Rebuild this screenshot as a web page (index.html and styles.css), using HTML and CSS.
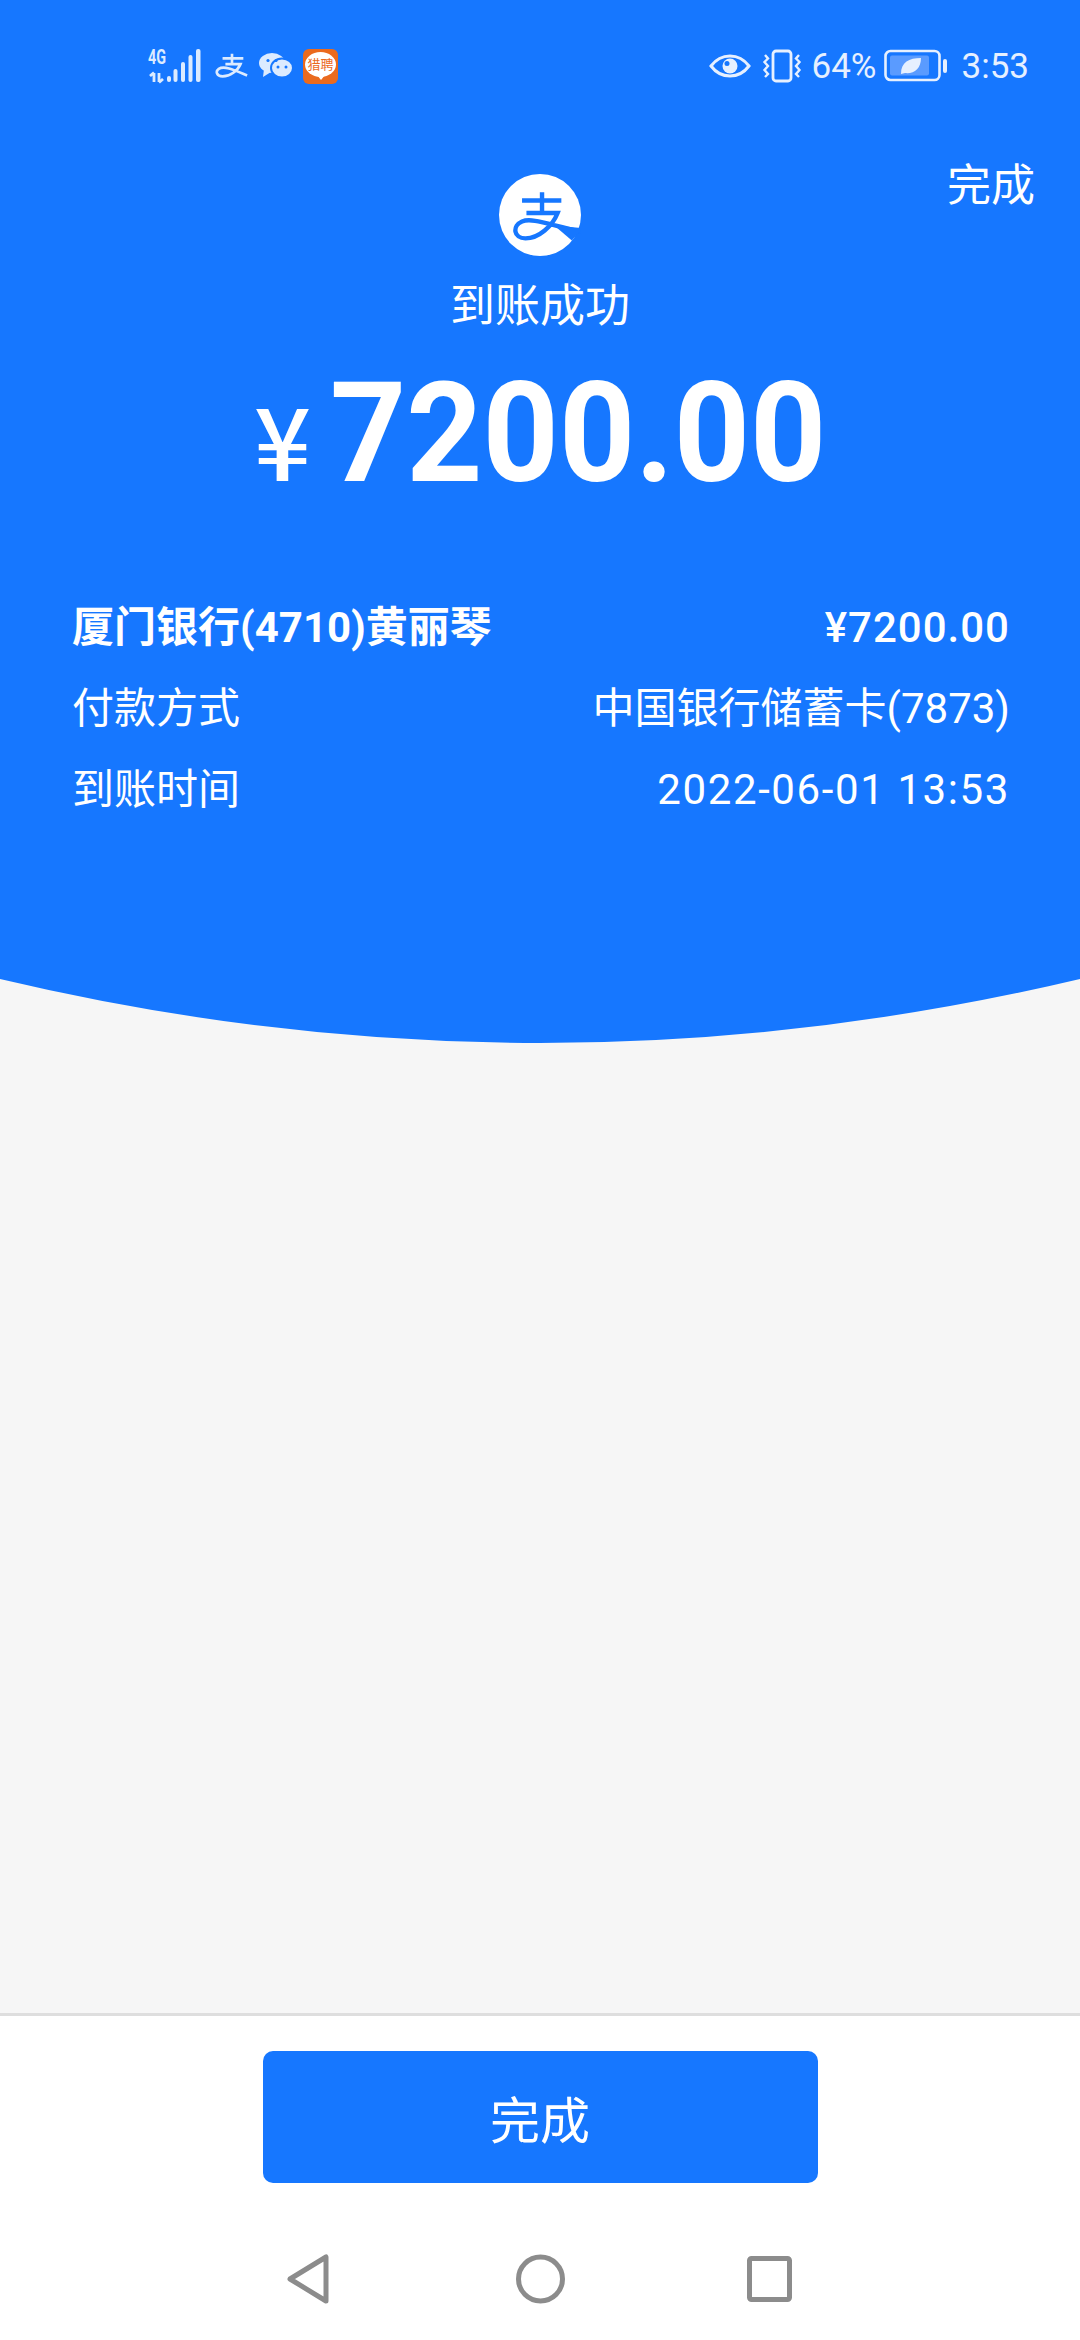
FILE: index.html
```html
<!DOCTYPE html>
<html>
<head>
    <title>到账成功</title>
    <meta charset="UTF-8">
    <meta name="viewport" content="width=device-width, initial-scale=1">
    <link rel="stylesheet" href="styles.css">
</head>
<body>
    <div class="page">
        <div class="hero">
            <div class="status-bar">
                <div class="status-left">
                    <div class="net">
                        <svg width="54" height="39" viewBox="0 -4 54 39">
                            <g fill="#dcebff">
                                <rect x="19" y="27" width="4" height="6" rx="2"/>
                                <rect x="25.500" y="20" width="4" height="13" rx="2"/>
                                <rect x="33" y="13" width="4" height="20" rx="2"/>
                                <rect x="40.500" y="6" width="4" height="27" rx="2"/>
                                <rect x="48" y="0" width="4.500" height="33" rx="2"/>
                            </g>
                            <g fill="none" stroke="#dcebff" stroke-width="2.800">
                                <path d="M6 24V33M2 27L6 23.500M11 24V33M15 30L11 33.500"/>
                            </g>
                            <text x="0" y="15" class="net-label" textLength="18" lengthAdjust="spacingAndGlyphs">4G</text>
                        </svg>
                    </div>
                    <svg class="ico-alipay" width="34" height="26" viewBox="0 0 36 26">
                        <path d="M8 5H30M18 0V10M11 11H27C24 18 16 24 8 24C2 24 0 19 4 16C10 12 22 18 34 23" fill="none" stroke="#dcebff" stroke-width="2.800"/>
                    </svg>
                    <svg class="ico-wechat" width="34" height="26" viewBox="0 0 34 26">
                        <ellipse cx="13" cy="10" rx="13" ry="10" fill="#dcebff"/>
                        <path d="M5 16L4 24L12 19Z" fill="#dcebff"/>
                        <ellipse cx="23" cy="15" rx="11" ry="9.500" fill="#dcebff" stroke="#1677ff" stroke-width="2"/>
                        <circle cx="9" cy="7.500" r="1.600" fill="#1677ff"/>
                        <circle cx="17" cy="7.500" r="1.600" fill="#1677ff"/>
                        <circle cx="19" cy="14" r="1.500" fill="#1677ff"/>
                        <circle cx="27" cy="14" r="1.500" fill="#1677ff"/>
                    </svg>
                    <div class="liepin"><span class="liepin-text">猎聘</span></div>
                </div>
                <div class="status-right">
                    <svg width="42" height="24" viewBox="0 0 42 24">
                        <path d="M2 12C8 4 14 2 21 2C28 2 34 4 40 12C34 20 28 22 21 22C14 22 8 20 2 12Z" fill="none" stroke="#e6f0ff" stroke-width="3"/>
                        <circle cx="21" cy="12" r="7.500" fill="#e6f0ff"/>
                        <circle cx="18" cy="9.500" r="2.500" fill="#1677ff"/>
                    </svg>
                    <svg class="ico-vibrate" width="40" height="34" viewBox="0 0 40 34">
                        <rect x="11" y="2" width="18" height="30" rx="3" fill="none" stroke="#e6f0ff" stroke-width="2.800"/>
                        <path d="M3 6L6 9.500L2.500 13L6 17L2.500 21L6 25L3 28M37 6L34 9.500L37.500 13L34 17L37.500 21L34 25L37 28" fill="none" stroke="#e6f0ff" stroke-width="2.400"/>
                    </svg>
                    <span class="status-text pct">64%</span>
                    <svg class="ico-battery" width="64" height="34" viewBox="0 0 64 34">
                        <rect x="1.500" y="2" width="54" height="29" rx="5" fill="none" stroke="#e6f0ff" stroke-width="2.600"/>
                        <rect x="6" y="6.500" width="39" height="20" rx="2" fill="#5a9bff"/>
                        <path d="M17 25C17 13 25 9 37 9C37 20 30 25 21 24L17 25Z" fill="#e6f0ff"/>
                        <rect x="59" y="10" width="4" height="14" rx="2" fill="#e6f0ff"/>
                    </svg>
                    <span class="status-text time">3:53</span>
                </div>
            </div>

            <div class="top-row">
                <div class="top-spacer"></div>
                <svg class="logo" width="82" height="82" viewBox="237 72 242 242">
                    <circle cx="358" cy="193" r="121" fill="#ffffff"/>
                    <path d="M305 150H421M364 126V186M318 187H410C395 225 355 262 315 262C280 262 275 225 305 212C335 200 385 222 480 242" fill="none" stroke="#1677ff" stroke-width="13"/>
                    <path d="M400 224L484 232L452 268Z" fill="#1677ff"/>
                </svg>
                <a class="done-link">完成</a>
            </div>

            <div class="title">到账成功</div>

            <div class="amount">
                <span class="amount-sign">¥</span>
                <span class="amount-num">7200.00</span>
            </div>

            <div class="details">
                <div class="row row-main">
                    <span>厦门银行(4710)黄丽琴</span>
                    <span class="row-money">¥7200.00</span>
                </div>
                <div class="row">
                    <span>付款方式</span>
                    <span>中国银行储蓄卡(7873)</span>
                </div>
                <div class="row">
                    <span>到账时间</span>
                    <span class="row-time">2022-06-01 13:53</span>
                </div>
            </div>
        </div>

        <svg class="curve" width="1080" height="64" viewBox="0 0 1080 64">
            <path d="M0 0H1080Q540 128 0 0Z" fill="#1677ff"/>
        </svg>

        <div class="content"></div>

        <div class="footer">
            <button type="button" class="btn-done">完成</button>
        </div>

        <div class="nav-bar">
            <svg class="nav-back" width="44" height="50" viewBox="0 0 44 50">
                <path d="M4 25L40 3V47Z" fill="none" stroke="#8c8c8c" stroke-width="5" stroke-linejoin="round"/>
            </svg>
            <svg width="49" height="50" viewBox="0 0 49 50">
                <circle cx="24.500" cy="25" r="22" fill="none" stroke="#8c8c8c" stroke-width="5"/>
            </svg>
            <svg class="nav-square" width="45" height="46" viewBox="0 0 45 46">
                <rect x="2.500" y="2.500" width="40" height="41" rx="2" fill="none" stroke="#8c8c8c" stroke-width="5"/>
            </svg>
        </div>
    </div>
</body>
</html>
```

FILE: styles.css
```css
html, body {
    margin: 0;
    padding: 0;
}

body {
    font-family: Roboto, "Noto Sans CJK SC", sans-serif;
    background-color: #f6f6f6;
}

.page {
    width: 1080px;
    height: 2340px;
    display: flex;
    flex-direction: column;
    overflow: hidden;
}

.hero {
    height: 979px;
    background-color: #1677ff;
    color: #ffffff;
    box-sizing: border-box;
    padding-top: 46px;
}

/* Status bar */
.status-bar {
    height: 40px;
    display: flex;
    justify-content: space-between;
    align-items: center;
    padding: 0 51px 0 148px;
}

.status-left, .status-right {
    display: flex;
    align-items: center;
}

.net {
    display: flex;
    margin-right: 13px;
    margin-bottom: 3px;
}

.net-label {
    font-family: Roboto, sans-serif;
    font-size: 20px;
    font-weight: 700;
    fill: #dcebff;
}

.ico-alipay {
    margin-right: 10px;
}

.ico-wechat {
    margin-right: 10px;
}

.liepin {
    width: 35px;
    height: 35px;
    border-radius: 6px;
    background-color: #ea6a1e;
    display: flex;
    align-items: center;
    justify-content: center;
}

.liepin-text {
    position: relative;
    width: 31px;
    height: 25px;
    line-height: 25px;
    margin-bottom: 3px;
    border-radius: 50%;
    background-color: #ffffff;
    color: #ea6a1e;
    font-size: 13px;
    text-align: center;
    white-space: nowrap;
}

.liepin-text::after {
    content: "";
    position: absolute;
    left: 12px;
    bottom: -3px;
    border-left: 4px solid transparent;
    border-right: 4px solid transparent;
    border-top: 5px solid #ffffff;
}

.status-text {
    font-size: 35px;
    color: #e6f0ff;
}

.ico-vibrate {
    margin-left: 11px;
}

.pct {
    margin-left: 10px;
}

.ico-battery {
    margin-left: 7px;
}

.time {
    margin-left: 14px;
}

/* Header */
.top-row {
    display: grid;
    grid-template-columns: 1fr auto 1fr;
    padding: 88px 45px 0;
}

.logo {
    display: block;
}

.done-link {
    justify-self: end;
    font-size: 44px;
    line-height: 52px;
    margin-top: -14px;
}

.title {
    text-align: center;
    font-size: 45px;
    line-height: 60px;
    margin-top: 21px;
}

.amount {
    display: flex;
    align-items: baseline;
    margin-top: 11px;
    padding-left: 254px;
    height: 170px;
}

.amount-sign {
    font-family: "Noto Sans CJK SC", sans-serif;
    font-size: 100px;
    width: 76px;
    line-height: 170px;
    font-weight: 500;
}

.amount-num {
    display: inline-block;
    font-size: 140px;
    line-height: 170px;
    font-weight: 700;
    transform: scaleX(0.95);
    transform-origin: left;
    white-space: nowrap;
}

/* Detail rows */
.details {
    margin-top: 69px;
    padding: 0 70px 0 72px;
}

.row {
    display: flex;
    justify-content: space-between;
    font-size: 42px;
    line-height: 81px;
}

.row-main {
    font-weight: 700;
}

.row-money {
    font-weight: 500;
    letter-spacing: 1px;
}

.row-time {
    letter-spacing: 1.6px;
}

.curve {
    display: block;
    flex: none;
}

.content {
    flex: 1;
}

/* Bottom */
.footer {
    height: 211px;
    box-sizing: border-box;
    background-color: #ffffff;
    border-top: 3px solid #dedede;
    display: flex;
    justify-content: center;
    padding-top: 35px;
    flex: none;
}

.btn-done {
    width: 555px;
    height: 132px;
    border: none;
    border-radius: 10px;
    background-color: #1677ff;
    color: #ffffff;
    font-family: "Noto Sans CJK SC", sans-serif;
    font-size: 50px;
}

.nav-bar {
    height: 116px;
    box-sizing: border-box;
    padding: 30px 2px 0 0;
    background-color: #ffffff;
    display: flex;
    justify-content: center;
    align-items: flex-start;
    flex: none;
}

.nav-back {
    margin-right: 186px;
}

.nav-square {
    margin-left: 182px;
    margin-top: 2px;
}
```
